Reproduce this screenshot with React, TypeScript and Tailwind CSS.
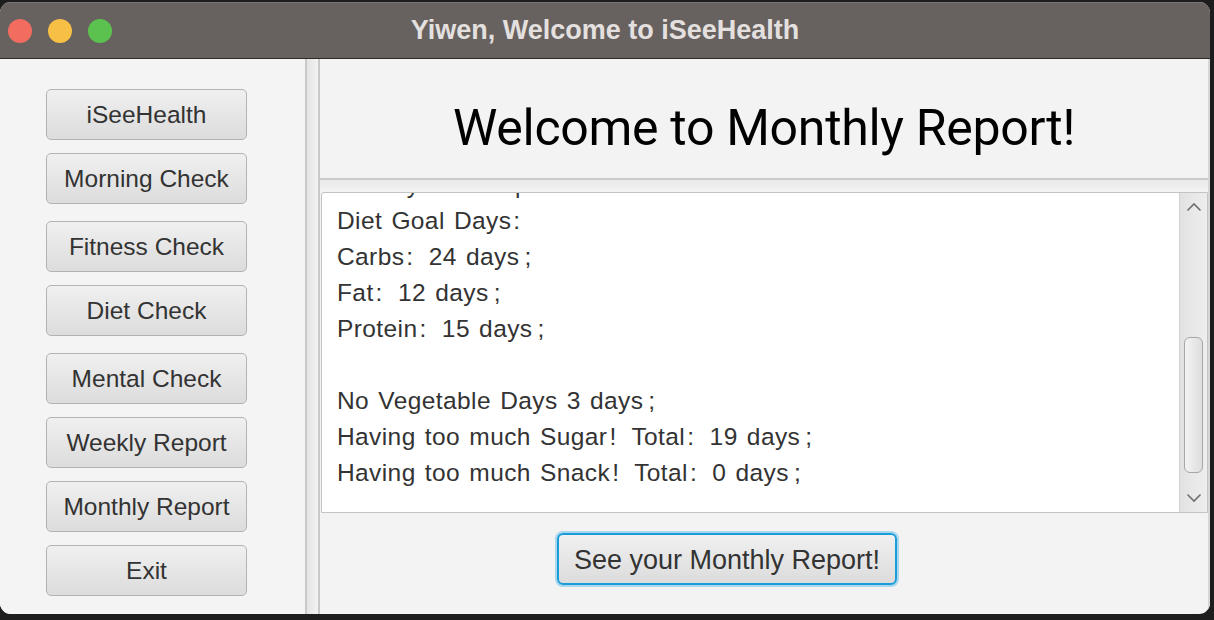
import React from "react";

const navItems: { label: string; gap: string }[] = [
    { label: "iSeeHealth", gap: "mt-0" },
    { label: "Morning Check", gap: "mt-[13px]" },
    { label: "Fitness Check", gap: "mt-[17px]" },
    { label: "Diet Check", gap: "mt-[13px]" },
    { label: "Mental Check", gap: "mt-[17px]" },
    { label: "Weekly Report", gap: "mt-[13px]" },
    { label: "Monthly Report", gap: "mt-[13px]" },
    { label: "Exit", gap: "mt-[13px]" },
];

// text area content, already scrolled a bit so the first line is cut off
const reportLines = [
    "Weekly Diet Report:",
    "Diet Goal Days:",
    "Carbs: 24 days;",
    "Fat: 12 days;",
    "Protein: 15 days;",
    "",
    "No Vegetable Days 3 days;",
    "Having too much Sugar! Total: 19 days;",
    "Having too much Snack! Total: 0 days;",
    "",
];

// the original font spaces its punctuation out a lot
const renderLine = (line: string) =>
    line.split(/([:;!])/).map((part, i) => {
        if (part === ":" || part === "!") {
            return (
                <span key={i} className="ml-[2px] mr-[6px]">
                    {part}
                </span>
            );
        }
        if (part === ";") {
            return (
                <span key={i} className="ml-[5px]">
                    {part}
                </span>
            );
        }
        return <React.Fragment key={i}>{part}</React.Fragment>;
    });

const Chevron: React.FC<{ up?: boolean }> = ({ up }) => (
    <svg width="16" height="10" viewBox="0 0 16 10" fill="none" stroke="#6f6f6f" strokeWidth={1.6}>
        {up ? <path d="M1.5 8.5L8 2l6.5 6.5" /> : <path d="M1.5 1.5L8 8l6.5-6.5" />}
    </svg>
);

const NavButton: React.FC<{ label: string; gap: string }> = ({ label, gap }) => (
    <button
        className={`${gap} w-[201px] h-[51px] rounded-[5px] border-[1.5px] border-[#b3b3b3] bg-gradient-to-b from-[#f0f0f0] to-[#dcdcdc] text-[24.5px] text-[#333333] font-['Liberation_Sans',Arial,sans-serif] leading-none pt-[2px]`}
    >
        {label}
    </button>
);

export default function App() {
    return (
        <div className="w-[1214px] h-[620px] bg-[#1d1d1d] pt-[2px] pr-[4px] overflow-hidden">
            <div className="w-[1210px] h-[612px] rounded-[11px] overflow-hidden flex flex-col bg-[#f3f3f3]">
                {/* Title bar */}
                <div className="h-[57px] shrink-0 bg-[#67615f] border-t border-[#7d7876] border-b border-b-[#2e2b2a] flex items-center relative">
                    <div className="flex items-center gap-[16px] pl-[8px]">
                        <span className="w-[24px] h-[24px] rounded-full bg-[#f26c60]" />
                        <span className="w-[24px] h-[24px] rounded-full bg-[#f7bf45]" />
                        <span className="w-[24px] h-[24px] rounded-full bg-[#5cc24f]" />
                    </div>
                    <div className="absolute inset-0 flex items-center justify-center text-[27px] font-bold text-[#e4e0df] font-['Liberation_Sans',Arial,sans-serif]">
                        Yiwen, Welcome to iSeeHealth
                    </div>
                </div>

                {/* Body */}
                <div className="flex-1 flex min-h-0">
                    {/* Left nav */}
                    <div className="w-[305px] shrink-0 bg-[#f4f4f4] flex flex-col pl-[46px] pt-[30px]">
                        {navItems.map((item) => (
                            <NavButton key={item.label} label={item.label} gap={item.gap} />
                        ))}
                    </div>

                    {/* Split divider */}
                    <div className="w-[15px] shrink-0 border-l-2 border-r-2 border-[#c9c9c9] bg-gradient-to-r from-[#e4e4e4] to-[#f2f2f2]" />

                    {/* Right pane */}
                    <div className="flex-1 flex flex-col border-r-2 border-[#d6d6d6] min-w-0">
                        <div className="h-[119px] shrink-0 flex items-center justify-center pt-[20px] text-[50px] text-black font-['Roboto',Arial,sans-serif] tracking-[-0.3px]">
                            Welcome to Monthly Report!
                        </div>
                        <div className="h-[14px] shrink-0 border-t-2 border-[#cacaca] bg-gradient-to-b from-[#e9e9e9] to-[#f4f4f4]" />

                        {/* Text area */}
                        <div className="h-[321px] shrink-0 ml-[1px] flex border border-[#c4c4c4] bg-white rounded-tl-[3px]">
                            <div className="flex-1 overflow-hidden pl-[15px]">
                                <div className="-mt-[26px] leading-[36px] text-[24.5px] text-[#333333] whitespace-pre tracking-[0.4px] [word-spacing:2px] font-['Liberation_Sans',Arial,sans-serif]">
                                    {reportLines.map((line, i) => (
                                        <div key={i} className="h-[36px]">
                                            {renderLine(line)}
                                        </div>
                                    ))}
                                </div>
                            </div>
                            {/* Scrollbar */}
                            <div className="w-[28px] shrink-0 border-l border-[#d2d2d2] bg-gradient-to-r from-[#e2e2e2] to-[#eeeeee] flex flex-col items-center">
                                <div className="h-[26px] flex items-center justify-center pt-[2px]">
                                    <Chevron up />
                                </div>
                                <div className="flex-1 w-full flex flex-col items-center">
                                    <div className="mt-[118px] w-[19px] h-[136px] rounded-[6px] border-[1.5px] border-[#a6a6a6] bg-gradient-to-r from-[#f3f3f3] to-[#dedede]" />
                                </div>
                                <div className="h-[26px] flex items-center justify-center pb-[2px]">
                                    <Chevron />
                                </div>
                            </div>
                        </div>

                        {/* Action */}
                        <div className="flex-1 flex items-start pt-[20px] pl-[237px]">
                            <button className="w-[340px] h-[52px] rounded-[6px] border-2 border-[#1a9cd8] ring-2 ring-[#a8d8ee] bg-gradient-to-b from-[#f0f0f0] to-[#dcdcdc] text-[27px] text-[#333333] font-['Liberation_Sans',Arial,sans-serif] leading-none pt-[2px]">
                                See your Monthly Report!
                            </button>
                        </div>
                    </div>
                </div>
            </div>
        </div>
    );
}
